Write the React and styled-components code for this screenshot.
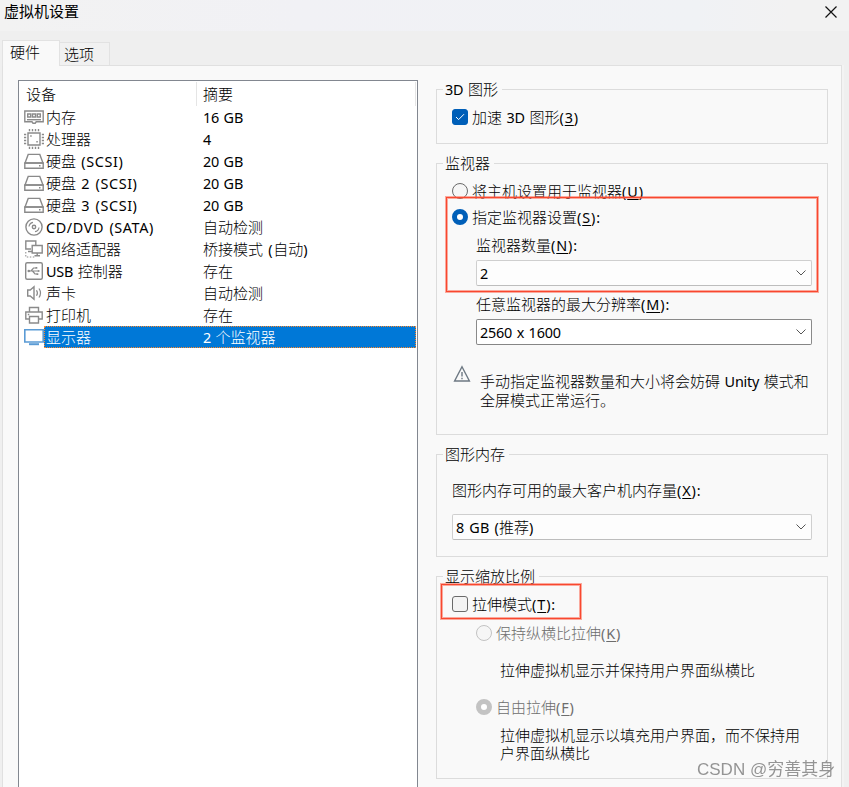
import React from "react";
import styled, { createGlobalStyle, css } from "styled-components";

const GlobalStyle = createGlobalStyle`
  * { box-sizing: border-box; }
  html, body { margin: 0; padding: 0; overflow: hidden; }
  body {
    font-family: "Noto Sans CJK SC", sans-serif;
    font-size: 15px;
    font-weight: 300;
    line-height: 18px;
    color: #000;
    background: #efefef;
  }
`;

const Window = styled.div`
  width: 849px;
  height: 787px;
  display: flex;
  flex-direction: column;
  overflow: hidden;
  background: #efefef;
`;

const TitleBar = styled.header`
  flex: none;
  height: 31px;
  display: flex;
  justify-content: space-between;
  padding: 2px 11px 0 4px;
  font-weight: 400;
  background: linear-gradient(90deg, #f2f2f2 0%, #f1f1f5 35%, #f0f2f5 82%, #f2f2f2 93%);
`;

const CloseIcon = styled.svg`
  width: 14px;
  height: 14px;
  margin-top: 3px;
`;

const TabBar = styled.nav`
  flex: none;
  display: flex;
  align-items: flex-end;
  height: 34px;
  padding-left: 2px;
`;

const Tab = styled.div`
  border: 1px solid #e2e2e2;
  border-bottom: 0;
  white-space: nowrap;
  ${(p) =>
    p.$active
      ? css`
          position: relative;
          width: 58px;
          height: 26px;
          margin-bottom: -1px;
          padding: 2px 0 0 7px;
          background: #f9f9f9;
        `
      : css`
          width: 50px;
          height: 23px;
          padding: 2px 0 0 4px;
          border-left: 0;
          background: #f1f1f1;
        `}
`;

const Page = styled.main`
  flex: 1;
  display: flex;
  align-items: flex-start;
  width: 840px;
  margin-left: 2px;
  padding: 14px 0 0 15px;
  border: 1px solid #e0e0e0;
  border-bottom: 0;
  background: #f9f9f9;
  box-shadow: 2px 0 #f3f3f3;
`;

const DeviceList = styled.section`
  flex: none;
  width: 400px;
  height: 720px;
  background: #fff;
  border: 1px solid #828790;
`;

const ListHeader = styled.div`
  display: flex;
  height: 25px;
  padding: 1px 1px 0 0;
`;

const HeaderCell = styled.div`
  width: ${(p) => p.$width}px;
  padding: 3px 0 0 ${(p) => p.$indent}px;
  border-right: 1px solid #e5e5e5;
`;

const DeviceRow = styled.div`
  display: flex;
  height: 22px;
  padding: 0 1px 0 5px;
`;

const IconSlot = styled.svg`
  flex: none;
  width: 20px;
  height: 20px;
  margin-top: 1px;
  fill: none;
  stroke: #8a8a8a;
  stroke-width: 1.4;
`;

const DeviceCells = styled.div`
  flex: 1;
  display: grid;
  grid-template-columns: 157px 1fr;
  padding-left: 1px;
  line-height: 19px;
  border: 1px ${(p) => (p.$selected ? "dotted #ff8728" : "solid transparent")};
  background: ${(p) => (p.$selected ? "#0078d7" : "transparent")};
  color: ${(p) => (p.$selected ? "#fff" : "#000")};
  white-space: nowrap;
`;

const Settings = styled.section`
  display: flex;
  flex-direction: column;
  gap: 19px;
  width: 392px;
  margin: 9px 0 0 18px;
`;

const Group = styled.div`
  position: relative;
  display: flex;
  flex-direction: column;
  align-items: flex-start;
  height: ${(p) => p.$height}px;
  border: 1px solid #dcdcdc;
`;

const Legend = styled.div`
  height: 18px;
  margin: -10px 0 0 6px;
  padding: 0 4px 0 2px;
  background: #f9f9f9;
  white-space: nowrap;
`;

const Option = styled.label`
  display: flex;
  align-items: center;
  gap: 4px;
  height: 20px;
  margin: ${(p) => p.$top}px 0 0 ${(p) => p.$left}px;
  color: ${(p) => (p.$disabled ? "#6d6d6d" : "#000")};
  white-space: nowrap;
`;

const CheckMark = styled.span`
  display: grid;
  place-items: center;
  width: 16px;
  height: 16px;
  border: 1px solid ${(p) => (p.$on ? "#005fb8" : "#6a6a6a")};
  border-radius: 3px;
  background: ${(p) => (p.$on ? "#005fb8" : "#f4f4f4")};
`;

const RadioMark = styled.span`
  width: 16px;
  height: 16px;
  border-radius: 50%;
  border: ${(p) => (p.$on ? 5 : 1)}px solid
    ${(p) => (p.$disabled ? "#c3c3c3" : p.$on ? "#005fb8" : "#6a6a6a")};
  background: ${(p) => (p.$on ? "#fff" : "#f6f6f6")};
`;

const Label = styled.div`
  height: 20px;
  line-height: 20px;
  margin: ${(p) => p.$top}px 0 0 ${(p) => p.$left}px;
  white-space: nowrap;
`;

const SelectBox = styled.div`
  display: flex;
  align-items: center;
  justify-content: space-between;
  width: ${(p) => p.$width}px;
  height: 26px;
  margin: ${(p) => p.$top}px 0 0 ${(p) => p.$left}px;
  padding: 0 5px 0 3px;
  border: 1px solid ${(p) => (p.$strong ? "#8a8a8a" : "#cfcfcf")};
  border-bottom-color: ${(p) => (p.$strong ? "#868686" : "#bdbdbd")};
  border-radius: 2px;
  background: ${(p) => (p.$strong ? "#fff" : "#fdfdfd")};
`;

const Warning = styled.div`
  display: flex;
  gap: 9px;
  margin: 20px 0 0 16px;
`;

const WarningIcon = styled.svg`
  width: 18px;
  height: 18px;
`;

const Paragraph = styled.div`
  margin: ${(p) => p.$top}px 0 0 ${(p) => p.$left || 0}px;
  white-space: nowrap;
`;

const Highlight = styled.div`
  position: absolute;
  left: ${(p) => p.$x}px;
  top: ${(p) => p.$y}px;
  width: ${(p) => p.$w}px;
  height: ${(p) => p.$h}px;
  border: 1px solid #f9482f;
  box-shadow: 0 0 0 1px rgba(252, 90, 65, 0.5), inset 0 0 0 1px rgba(252, 90, 65, 0.5);
  pointer-events: none;
`;

const Watermark = styled.div`
  position: fixed;
  left: 697px;
  top: 759px;
  font: 17px/22px "Liberation Sans", "Noto Sans CJK SC", sans-serif;
  color: #949494;
  white-space: nowrap;
`;

const Latin = styled.span`
  font-family: "Noto Sans", sans-serif;
  font-size: 14.4px;
  font-weight: 400;
  word-spacing: 1px;
  letter-spacing: ${(p) => p.$tracking}px;
`;

const Accel = styled.span`
  text-decoration: underline;
  text-decoration-thickness: 1px;
  text-underline-offset: 2px;
`;

/* Bracketed runs are set wider than plain ones. */
function tracking(run) {
  if (/\(_/.test(run)) return 0.9;
  if (/[()]/.test(run)) return run.startsWith("8") ? 0.2 : 0.6;
  return -0.2;
}

/* Latin runs use their own face; "_X" marks an accelerator key. */
function T({ children }) {
  return children.split(/([\x20-\x7e]+)/).map((run, i) =>
    i % 2 === 0 ? (
      run
    ) : (
      <Latin key={i} $tracking={tracking(run)}>
        {run.split(/(_.)/).map((s, j) => (s[0] === "_" ? <Accel key={j}>{s[1]}</Accel> : s))}
      </Latin>
    )
  );
}

const icons = {
  memory: (
    <>
      <path d="M.8 4h18.4v10.8h-7l-1 1.4H9l-1-1.4H.8z" />
      <path d="M3.7 7h3v3h-3zM8.5 7h3v3h-3zM13.3 7h3v3h-3z" />
      <path d="M3 12.7h14" />
    </>
  ),
  cpu: (
    <>
      <path d="M4 4h12v12H4z" />
      <path d="M5.5 0v2.2M8.5 0v2.2M11.5 0v2.2M14.5 0v2.2M5.5 17.8V20M8.5 17.8V20M11.5 17.8V20M14.5 17.8V20M0 5.5h2.2M0 8.5h2.2M0 11.5h2.2M0 14.5h2.2M17.8 5.5H20M17.8 8.5H20M17.8 11.5H20M17.8 14.5H20" />
      <path d="M6.2 7h1.5M12.3 12.8h1.5" strokeWidth="1.6" />
    </>
  ),
  disk: (
    <>
      <path d="M4.2 3.4h11.6L19 12H1z" />
      <path d="M.8 12h18.4v5.3H.8z" />
      <path d="M15 14.8h1.5" />
    </>
  ),
  disc: (
    <>
      <circle cx="10" cy="10" r="8.1" />
      <circle cx="10" cy="10" r="1.7" />
      <path d="M5 9.5a5 5 0 0 1 4-4.2M15 10.5a5 5 0 0 1-4 4.2" strokeWidth="1.2" />
    </>
  ),
  network: (
    <>
      <path d="M7 10H1.8V2h10v4M4 12.5h4" />
      <path d="M8.2 6.5h10v7.5h-10zM13.2 14v3M10.5 16.7h5.5" />
      <path d="M1.8 13v5h9" strokeDasharray="1.5 1.5" strokeWidth="1" />
    </>
  ),
  usb: (
    <>
      <rect x="1.7" y="1.7" width="16.6" height="16.6" rx="1.5" />
      <path d="M4.5 10h11M7 10l2.5-3H12M8.5 10l2.5 3h2" strokeWidth="1.2" />
      <path d="M15.8 10l-2-1.3v2.6zM11.5 6h1.8v1.8h-1.8zM12.5 12.2h1.8V14h-1.8z" fill="#8a8a8a" stroke="none" />
      <circle cx="4.8" cy="10" r="1.3" fill="#8a8a8a" stroke="none" />
    </>
  ),
  sound: (
    <>
      <path d="M3.7 7h2.5L10 3.8v12.4L6.2 13H3.7z" />
      <path d="M12.5 7.2q1.8 2.8 0 5.6M15 5.5q3 4.5 0 9" strokeWidth="1.2" />
    </>
  ),
  printer: (
    <>
      <path d="M5.5 7V2.5h9V7M5.5 14H1.8V7h16.4v7h-3.7" />
      <path d="M5.5 11.5h9V18h-9zM3.8 9.5h1.5" />
    </>
  ),
  display: (
    <>
      <path d="M.8 2.8h18.4v12.2H.8z" stroke="#5a9bd5" fill="#fff" strokeWidth="1.6" />
      <path d="M5 17.2h10" stroke="#5a9bd5" strokeWidth="2" />
    </>
  ),
};

const devices = [
  ["memory", "内存", "16 GB"],
  ["cpu", "处理器", "4"],
  ["disk", "硬盘 (SCSI)", "20 GB"],
  ["disk", "硬盘 2 (SCSI)", "20 GB"],
  ["disk", "硬盘 3 (SCSI)", "20 GB"],
  ["disc", "CD/DVD (SATA)", "自动检测"],
  ["network", "网络适配器", "桥接模式 (自动)"],
  ["usb", "USB 控制器", "存在"],
  ["sound", "声卡", "自动检测"],
  ["printer", "打印机", "存在"],
  ["display", "显示器", "2 个监视器"],
];

function Select({ value, ...box }) {
  return (
    <SelectBox {...box}>
      <span><T>{value}</T></span>
      <svg width="10" height="6" viewBox="0 0 10 6" fill="none" stroke="#555">
        <path d="M.5.5 5 5 9.5.5" />
      </svg>
    </SelectBox>
  );
}

function Radio({ on, disabled, text, top, left }) {
  return (
    <Option $top={top} $left={left} $disabled={disabled}>
      <RadioMark $on={on} $disabled={disabled} />
      <span><T>{text}</T></span>
    </Option>
  );
}

function Check({ on, text, top, left }) {
  return (
    <Option $top={top} $left={left}>
      <CheckMark $on={on}>
        {on && (
          <svg width="10" height="8" viewBox="0 0 10 8" fill="none" stroke="#fff">
            <path d="M1 4l2.6 2.6L9 1.2" />
          </svg>
        )}
      </CheckMark>
      <span><T>{text}</T></span>
    </Option>
  );
}

export default function App() {
  return (
    <Window>
      <GlobalStyle />
      <TitleBar>
        <span>虚拟机设置</span>
        <CloseIcon viewBox="0 0 14 14" stroke="#111" strokeWidth="1.2">
          <path d="M1.5 1.5l11 11M12.5 1.5l-11 11" />
        </CloseIcon>
      </TitleBar>
      <TabBar>
        <Tab $active>硬件</Tab>
        <Tab>选项</Tab>
      </TabBar>
      <Page>
        <DeviceList>
          <ListHeader>
            <HeaderCell $width={178} $indent={7}>设备</HeaderCell>
            <HeaderCell $width={219} $indent={6}>摘要</HeaderCell>
          </ListHeader>
          {devices.map(([icon, name, summary], i) => (
            <DeviceRow key={i}>
              <IconSlot viewBox="0 0 20 20">{icons[icon]}</IconSlot>
              <DeviceCells $selected={icon === "display"}>
                <span><T>{name}</T></span>
                <span><T>{summary}</T></span>
              </DeviceCells>
            </DeviceRow>
          ))}
        </DeviceList>
        <Settings>
          <Group $height={55}>
            <Legend><T>3D 图形</T></Legend>
            <Check on text="加速 3D 图形(_3)" top={9} left={15} />
          </Group>
          <Group $height={272}>
            <Legend>监视器</Legend>
            <Radio text="将主机设置用于监视器(_U)" top={9} left={15} />
            <Radio on text="指定监视器设置(_S):" top={6} left={15} />
            <Label $top={8} $left={39}><T>监视器数量(_N):</T></Label>
            <Select value="2" $top={5} $left={39} $width={336} />
            <Label $top={8} $left={39}><T>任意监视器的最大分辨率(_M):</T></Label>
            <Select value="2560 x 1600" $strong $top={5} $left={39} $width={336} />
            <Warning>
              <WarningIcon viewBox="0 0 18 18" fill="none" stroke="#6d7883" strokeWidth="1.4">
                <path d="M9 1.8 16.4 16H1.6z" />
                <path d="M9 7v4.5M9 12.8v1.5" />
              </WarningIcon>
              <Paragraph $top={7}>
                <T>手动指定监视器数量和大小将会妨碍 Unity 模式和</T>
                <br />
                全屏模式正常运行。
              </Paragraph>
            </Warning>
            <Highlight $x={9} $y={33} $w={372} $h={95} />
          </Group>
          <Group $height={103}>
            <Legend>图形内存</Legend>
            <Label $top={17} $left={15}><T>图形内存可用的最大客户机内存量(_X):</T></Label>
            <Select value="8 GB (推荐)" $top={14} $left={15} $width={360} />
          </Group>
          <Group $height={203}>
            <Legend>显示缩放比例</Legend>
            <Check text="拉伸模式(_T):" top={9} left={15} />
            <Radio disabled text="保持纵横比拉伸(_K)" top={9} left={39} />
            <Paragraph $top={18} $left={63}>拉伸虚拟机显示并保持用户界面纵横比</Paragraph>
            <Radio on disabled text="自由拉伸(_F)" top={18} left={39} />
            <Paragraph $top={9} $left={63}>
              拉伸虚拟机显示以填充用户界面，而不保持用
              <br />
              户界面纵横比
            </Paragraph>
            <Highlight $x={4} $y={7} $w={140} $h={35} />
          </Group>
        </Settings>
      </Page>
      <Watermark>CSDN @穷善其身</Watermark>
    </Window>
  );
}
